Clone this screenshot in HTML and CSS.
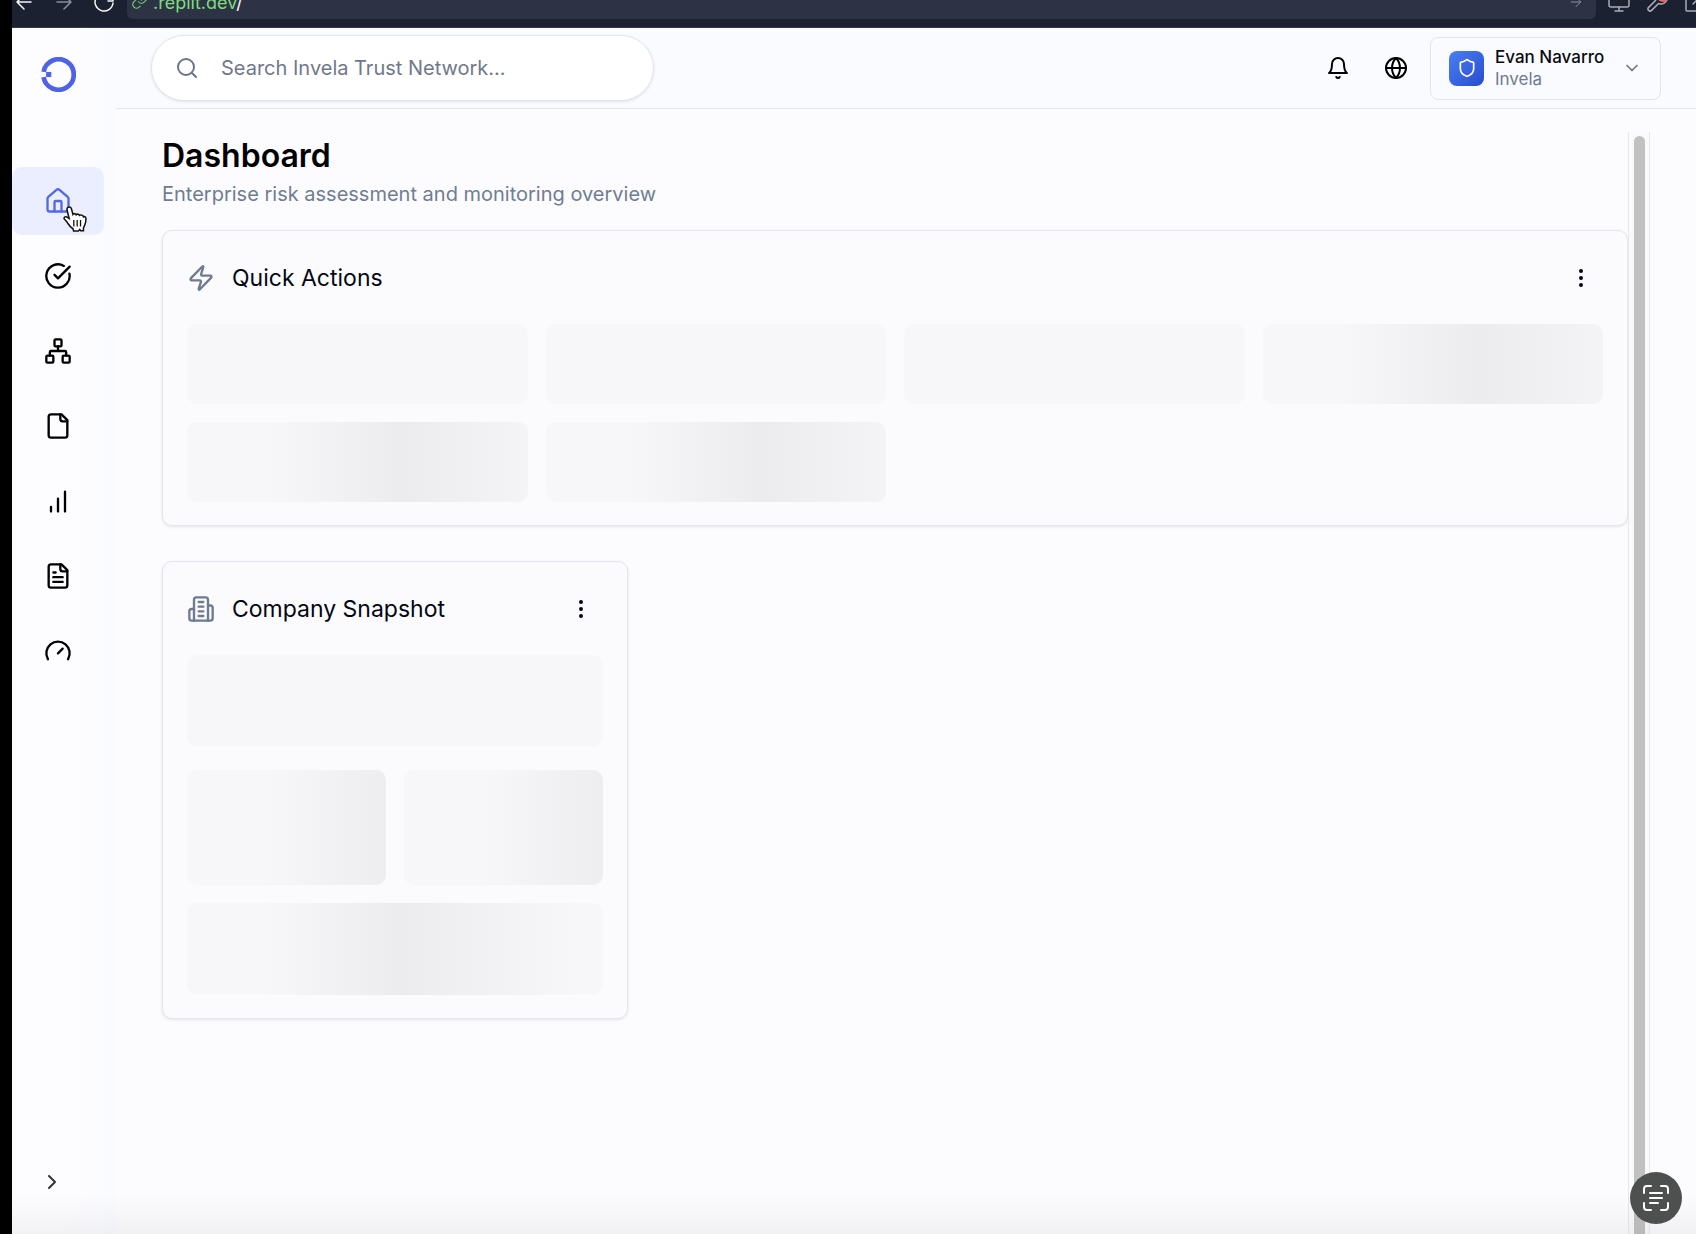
FILE: index.html
```html
<!DOCTYPE html>
<html lang="en">
<head>
<meta charset="utf-8">
<meta name="viewport" content="width=device-width, initial-scale=1">
<title>Invela Trust Network</title>
<link rel="stylesheet" href="styles.css">
</head>
<body>
<div class="window">
  <div class="browser-bar">
    <div class="browser-nav">
      <svg class="glyph" viewBox="0 0 24 24"><path d="M19 12H5M12 5l-7 7 7 7"/></svg>
      <svg class="glyph dim" viewBox="0 0 24 24"><path d="M5 12h14M12 5l7 7-7 7"/></svg>
      <svg class="glyph" viewBox="0 0 24 24"><path d="M21 13a9 9 0 1 1-3-7.700M21 3v8h-5"/></svg>
    </div>
    <div class="address">
      <svg class="glyph link" viewBox="0 0 24 24"><path d="M10 13a5 5 0 0 0 7.500.5l3-3a5 5 0 0 0-7-7l-1.700 1.700M14 11a5 5 0 0 0-7.500-.5l-3 3a5 5 0 0 0 7 7l1.700-1.700"/></svg>
      <span class="url"><span class="domain">.replit.dev</span>/</span>
      <svg class="glyph dim go" viewBox="0 0 24 24"><path d="M5 12h14M12 5l7 7-7 7"/></svg>
    </div>
    <div class="browser-tools">
      <svg class="glyph tool" viewBox="0 0 24 24"><rect x="2" y="3" width="20" height="14" rx="2"/><path d="M8 21h8M12 17v4"/></svg>
      <span class="tool-badged">
        <svg class="glyph tool" viewBox="0 0 24 24"><path d="M14.700 6.300a1 1 0 0 0 0 1.400l1.600 1.600a1 1 0 0 0 1.400 0l3.770-3.770a6 6 0 0 1-7.940 7.940l-6.910 6.910a2.120 2.120 0 0 1-3-3l6.910-6.910a6 6 0 0 1 7.940-7.940z"/></svg>
        <span class="dot"></span>
      </span>
      <svg class="glyph tool" viewBox="0 0 24 24"><path d="M21 12v8a1 1 0 0 1-1 1H4a1 1 0 0 1-1-1V4a1 1 0 0 1 1-1h7M15 3h6v6M10 14L21 3"/></svg>
    </div>
  </div>

  <div class="app">
    <aside class="sidebar">
      <a class="logo" href="#" aria-label="Invela">
        <svg viewBox="0 0 34 34"><path d="M2.500 14.500A14.800 14.800 0 1 1 2.500 19.500" fill="none" stroke="#4f63e6" stroke-width="4.600"/><rect x="5" y="14.500" width="5" height="5" fill="#4f63e6"/></svg>
      </a>
      <nav class="nav" aria-label="Main">
        <a class="nav-item active" href="#" aria-label="Dashboard">
          <svg class="icon" viewBox="0 0 24 24"><path d="M15 21v-8a1 1 0 0 0-1-1h-4a1 1 0 0 0-1 1v8"/><path d="M3 10a2 2 0 0 1 .709-1.528l7-5.999a2 2 0 0 1 2.582 0l7 5.999A2 2 0 0 1 21 10v9a2 2 0 0 1-2 2H5a2 2 0 0 1-2-2z"/></svg>
          <svg class="pointer" viewBox="0 0 22 24"><path d="M4.500 1.200c1.400-.9 2.800 0 3.200 1.400l1.400 5.200c.7-1.100 2.500-1 3 .3.900-1 2.600-.7 3.100.6 1.300-.9 3.200-.3 3.600 1.300.6-.6 2.200-.2 2.300 1.400.1 2.300-.3 4.300-1.100 6.300l-1.200 2.600v2.600h-2.500l-.9-1.300-1.300 1.500H9.700l-.6-2.100c-1.500-1-3.600-3.200-4.800-5.100-.8-1.400-2.200-2.700-3-3.600-1-1.300.4-2.900 2-2.200l2.300 1.500L3.600 3.500c-.2-.9.200-1.800.9-2.300z" fill="#fff" stroke="#111" stroke-width="1.400"/><path d="M9.900 13v6M13 13v6M16.100 13v6" fill="none" stroke="#111" stroke-width="1.200"/></svg>
        </a>
        <a class="nav-item" href="#" aria-label="Tasks"><svg class="icon" viewBox="0 0 24 24"><path d="M21.801 10A10 10 0 1 1 17 3.335"/><path d="m9 11 3 3L22 4"/></svg></a>
        <a class="nav-item" href="#" aria-label="Network"><svg class="icon" viewBox="0 0 24 24"><rect x="16" y="16" width="6" height="6" rx="1"/><rect x="2" y="16" width="6" height="6" rx="1"/><rect x="9" y="2" width="6" height="6" rx="1"/><path d="M5 16v-3a1 1 0 0 1 1-1h12a1 1 0 0 1 1 1v3M12 12V8"/></svg></a>
        <a class="nav-item" href="#" aria-label="Files"><svg class="icon" viewBox="0 0 24 24"><path d="M15 2H6a2 2 0 0 0-2 2v16a2 2 0 0 0 2 2h12a2 2 0 0 0 2-2V7Z"/><path d="M14 2v4a2 2 0 0 0 2 2h4"/></svg></a>
        <a class="nav-item" href="#" aria-label="Insights"><svg class="icon" viewBox="0 0 24 24"><path d="M12 21V10M18 21V4M6 21v-4"/></svg></a>
        <a class="nav-item" href="#" aria-label="Reports"><svg class="icon" viewBox="0 0 24 24"><path d="M15 2H6a2 2 0 0 0-2 2v16a2 2 0 0 0 2 2h12a2 2 0 0 0 2-2V7Z"/><path d="M14 2v4a2 2 0 0 0 2 2h4M10 9H8M16 13H8M16 17H8"/></svg></a>
        <a class="nav-item" href="#" aria-label="Performance"><svg class="icon" viewBox="0 0 24 24"><path d="m12 14 4-4M3.340 19a10 10 0 1 1 17.320 0"/></svg></a>
      </nav>
      <button class="expand" type="button" aria-label="Expand sidebar"><svg class="icon" viewBox="0 0 24 24"><path d="m9 18 6-6-6-6"/></svg></button>
    </aside>

    <div class="page">
      <header class="topbar">
        <label class="search">
          <svg class="icon small" viewBox="0 0 24 24"><circle cx="11" cy="11" r="8"/><path d="m21 21-4.300-4.300"/></svg>
          <input type="search" placeholder="Search Invela Trust Network..." aria-label="Search Invela Trust Network">
        </label>
        <div class="actions">
          <button class="icon-button" type="button" aria-label="Notifications"><svg class="icon small" viewBox="0 0 24 24"><path d="M6 8a6 6 0 0 1 12 0c0 7 3 9 3 9H3s3-2 3-9M10.300 21a1.940 1.940 0 0 0 3.400 0"/></svg></button>
          <button class="icon-button" type="button" aria-label="Language"><svg class="icon small" viewBox="0 0 24 24"><circle cx="12" cy="12" r="10"/><path d="M12 2a14.500 14.500 0 0 0 0 20 14.500 14.500 0 0 0 0-20M2 12h20"/></svg></button>
          <button class="account" type="button">
            <span class="avatar"><svg class="icon" viewBox="0 0 24 24"><path d="M20 13c0 5-3.500 7.500-7.660 8.950a1 1 0 0 1-.67-.01C7.500 20.500 4 18 4 13V6a1 1 0 0 1 1-1c2 0 4.500-1.200 6.240-2.720a1.170 1.170 0 0 1 1.520 0C14.510 3.810 17 5 19 5a1 1 0 0 1 1 1z"/></svg></span>
            <span class="who"><span class="name">Evan Navarro</span><span class="org">Invela</span></span>
            <svg class="icon chevron" viewBox="0 0 24 24"><path d="m6 9 6 6 6-6"/></svg>
          </button>
        </div>
      </header>

      <div class="viewport">
        <main class="content">
          <div class="heading">
            <h1>Dashboard</h1>
            <p>Enterprise risk assessment and monitoring overview</p>
          </div>
          <div class="widgets">
            <section class="card wide">
              <div class="card-head">
                <svg class="icon" viewBox="0 0 24 24"><path d="M4 14a1 1 0 0 1-.78-1.630l9.900-10.200a.5.5 0 0 1 .86.460l-1.920 6.020A1 1 0 0 0 13 10h7a1 1 0 0 1 .78 1.630l-9.900 10.200a.5.5 0 0 1-.86-.460l1.920-6.020A1 1 0 0 0 11 14z"/></svg>
                <h2>Quick Actions</h2>
                <button class="menu" type="button" aria-label="Quick Actions menu"><svg class="icon small" viewBox="0 0 24 24"><circle cx="12" cy="12" r="1"/><circle cx="12" cy="5" r="1"/><circle cx="12" cy="19" r="1"/></svg></button>
              </div>
              <div class="tiles four">
                <div class="tile"></div><div class="tile"></div><div class="tile"></div><div class="tile shimmer"></div>
                <div class="tile shimmer"></div><div class="tile shimmer"></div>
              </div>
            </section>
            <section class="card">
              <div class="card-head">
                <svg class="icon" viewBox="0 0 24 24"><path d="M6 22V4a2 2 0 0 1 2-2h8a2 2 0 0 1 2 2v18Z"/><path d="M6 12H4a2 2 0 0 0-2 2v6a2 2 0 0 0 2 2h2M18 9h2a2 2 0 0 1 2 2v9a2 2 0 0 1-2 2h-2M10 6h4M10 10h4M10 14h4M10 18h4"/></svg>
                <h2>Company Snapshot</h2>
                <button class="menu" type="button" aria-label="Company Snapshot menu"><svg class="icon small" viewBox="0 0 24 24"><circle cx="12" cy="12" r="1"/><circle cx="12" cy="5" r="1"/><circle cx="12" cy="19" r="1"/></svg></button>
              </div>
              <div class="snapshot">
                <div class="tile banner"></div>
                <div class="tiles two"><div class="tile tall shimmer"></div><div class="tile tall shimmer"></div></div>
                <div class="tile medium shimmer"></div>
              </div>
            </section>
          </div>
        </main>
        <div class="scroll-track"><div class="scroll-thumb"></div></div>
      </div>
    </div>
  </div>
  <div class="bottom-fade"></div>
  <button class="live-text" type="button" aria-label="Scan text"><svg viewBox="0 0 28 28"><path d="M2 9V5a3 3 0 0 1 3-3h4M19 2h4a3 3 0 0 1 3 3v4M26 19v4a3 3 0 0 1-3 3h-4M9 26H5a3 3 0 0 1-3-3v-4"/><path d="M8 9h12M8 14h12M8 19h8"/></svg></button>
</div>
</body>
</html>
```

FILE: styles.css
```css
* { box-sizing: border-box; }

body {
  margin: 0;
  background: #000;
  color: #030712;
  font-family: Inter, "Liberation Sans", sans-serif;
}

button { font: inherit; color: inherit; background: none; border: 0; padding: 0; }
a { color: inherit; text-decoration: none; }
h1, h2, p { margin: 0; }
svg { display: block; flex: none; }

.window {
  min-height: 100vh;
  padding-left: 12px;
  display: flex;
  flex-direction: column;
  overflow: hidden;
}

.icon {
  width: 28px;
  height: 28px;
  fill: none;
  stroke: currentColor;
  stroke-width: 2;
  stroke-linecap: round;
  stroke-linejoin: round;
}
.icon.small { width: 24px; height: 24px; }

/* Browser chrome */
.browser-bar {
  height: 28px;
  display: flex;
  align-items: flex-start;
  background: #1c2131;
  border-bottom: 1px solid #34384a;
  overflow: hidden;
}
.glyph {
  width: 24px;
  height: 24px;
  margin-top: -10px;
  fill: none;
  stroke: #f5f6f8;
  stroke-width: 1.500;
  stroke-linecap: round;
  stroke-linejoin: round;
}
.glyph.dim { stroke: #8b8f9c; }
.browser-nav { width: 115px; display: flex; gap: 16px; }
.address {
  flex: 1;
  height: 19px;
  display: flex;
  gap: 4px;
  padding: 0 12px 0 4px;
  background: #2e3245;
  border-radius: 0 0 6px 6px;
}
.glyph.link { width: 18px; height: 18px; margin-top: -8px; stroke: #74cc74; }
.url { margin-top: -9px; font-size: 18px; line-height: 24px; color: #f5f6f8; }
.domain { color: #7ddc7d; }
.glyph.go { width: 16px; height: 16px; margin-left: auto; margin-top: -6px; }
.browser-tools { width: 100px; display: flex; gap: 14px; padding-left: 11px; }
.glyph.tool { stroke: #a9acb6; }
.tool-badged { position: relative; }
.dot { position: absolute; top: -10px; right: 0; width: 12px; height: 12px; border-radius: 50%; background: #f4635f; }

/* App shell */
.app { flex: 1; display: flex; background: #fcfcfe; }
.sidebar {
  width: 104px;
  flex: none;
  display: flex;
  flex-direction: column;
  align-items: center;
  padding: 29px 12px 40px 0;
  background: linear-gradient(90deg, #fdfdff 50%, #fafbff);
}
.logo svg { width: 35px; height: 35px; }
.nav { align-self: stretch; margin-top: 75px; display: flex; flex-direction: column; gap: 7px; color: #000; }
.nav-item {
  position: relative;
  height: 68px;
  display: flex;
  align-items: center;
  justify-content: center;
  border-radius: 10px;
}
.nav-item.active { background: #ebeeff; color: #5268e4; }
.pointer { position: absolute; left: 51px; top: 39px; width: 24px; height: 26px; }
.expand { margin: auto 12px 0 0; color: #30323c; }
.expand .icon { width: 24px; height: 24px; }

.page { flex: 1; min-width: 0; display: flex; flex-direction: column; }
.topbar {
  height: 81px;
  display: flex;
  align-items: center;
  justify-content: space-between;
  padding: 0 35px;
  background: #fafbff;
  border-bottom: 1px solid #e4e6ed;
}
.search {
  width: 503px;
  height: 66px;
  display: flex;
  align-items: center;
  gap: 22px;
  padding: 0 23px;
  background: #fff;
  border: 1px solid #e2e5ec;
  border-radius: 33px;
  box-shadow: 0 1px 3px #1018281a;
  color: #6b7589;
}
.search input {
  flex: 1;
  min-width: 0;
  padding: 0;
  border: 0;
  outline: 0;
  background: none;
  font: 400 20px/28px Inter, "Liberation Sans", sans-serif;
}
.search input::placeholder { color: #6f788b; opacity: 1; }
.actions { display: flex; align-items: center; gap: 34px; }
.icon-button { color: #000; }
.account {
  width: 231px;
  height: 63px;
  margin-left: -12px;
  display: flex;
  align-items: center;
  padding: 0 18px;
  border: 1px solid #e2e5ec;
  border-radius: 8px;
  text-align: left;
}
.avatar {
  width: 35px;
  height: 35px;
  display: flex;
  align-items: center;
  justify-content: center;
  border-radius: 8px;
  color: #fff;
  background: linear-gradient(135deg, #4a80f0, #284bd0);
}
.avatar .icon { width: 20px; height: 20px; }
.who { margin-left: 11px; display: flex; flex-direction: column; }
.name { font-size: 17px; line-height: 22px; font-weight: 500; color: #0a0a0f; }
.org { font-size: 17px; line-height: 22px; color: #6f7a90; }
.chevron { width: 20px; height: 20px; margin-left: auto; color: #6f747f; }

/* Scrolling area */
.viewport { flex: 1; display: flex; padding: 23px 46px 0 46px; }
.content { flex: 1; min-width: 0; }
.scroll-track {
  width: 22px;
  padding: 4px 4px 0 5px;
  background: #fafafa;
  border: 1px solid #e8e8e8;
  border-width: 0 1px;
}
.scroll-thumb { height: 100%; background: #c1c1c1; border-radius: 6px 6px 0 0; }

.heading h1 { font-size: 32px; line-height: 48px; font-weight: 600; color: #000; }
.heading p { font-size: 20px; line-height: 28px; color: #6f7d93; }
.widgets {
  margin-top: 22px;
  display: grid;
  grid-template-columns: repeat(3, minmax(0, 1fr));
  gap: 35px 34px;
}
.card {
  padding: 24px 24px 23px;
  background: #fbfbfe;
  border: 1px solid #e2e6ef;
  border-radius: 10px;
  box-shadow: 0 1px 3px #1018281a;
}
.wide { grid-column: 1 / -1; }
.card-head { height: 46px; margin-bottom: 23px; display: flex; align-items: center; color: #6e7a8f; }
.card-head h2 { margin-left: 17px; font-size: 23px; line-height: 32px; font-weight: 400; color: #030712; }
.menu { margin: 0 10px 0 auto; color: #030712; }
.tiles { display: grid; gap: 18px; }
.four { grid-template-columns: repeat(4, minmax(0, 1fr)); }
.two { grid-template-columns: repeat(2, minmax(0, 1fr)); }
.tile { height: 80px; background-color: #f7f7f9; border-radius: 10px; }
.tile.shimmer { background-image: linear-gradient(90deg, #f7f7f9 80px, #ececef 215px, #f7f7f9 390px); }
.snapshot { display: flex; flex-direction: column; gap: 18px; }
.tile.medium, .tile.banner { height: 92px; }
.tile.banner { margin-bottom: 5px; }
.tile.tall { height: 115px; }

/* Overlays at the bottom of the window */
.bottom-fade {
  position: fixed;
  left: 12px;
  right: 0;
  bottom: 0;
  height: 40px;
  background: linear-gradient(#50506000, #50506010);
  pointer-events: none;
}
.live-text {
  position: fixed;
  right: 14px;
  bottom: 10px;
  width: 52px;
  height: 52px;
  display: flex;
  align-items: center;
  justify-content: center;
  border-radius: 50%;
  background: #4e504f;
}
.live-text svg { width: 28px; height: 28px; fill: none; stroke: #fff; stroke-width: 2; stroke-linecap: round; }
```
